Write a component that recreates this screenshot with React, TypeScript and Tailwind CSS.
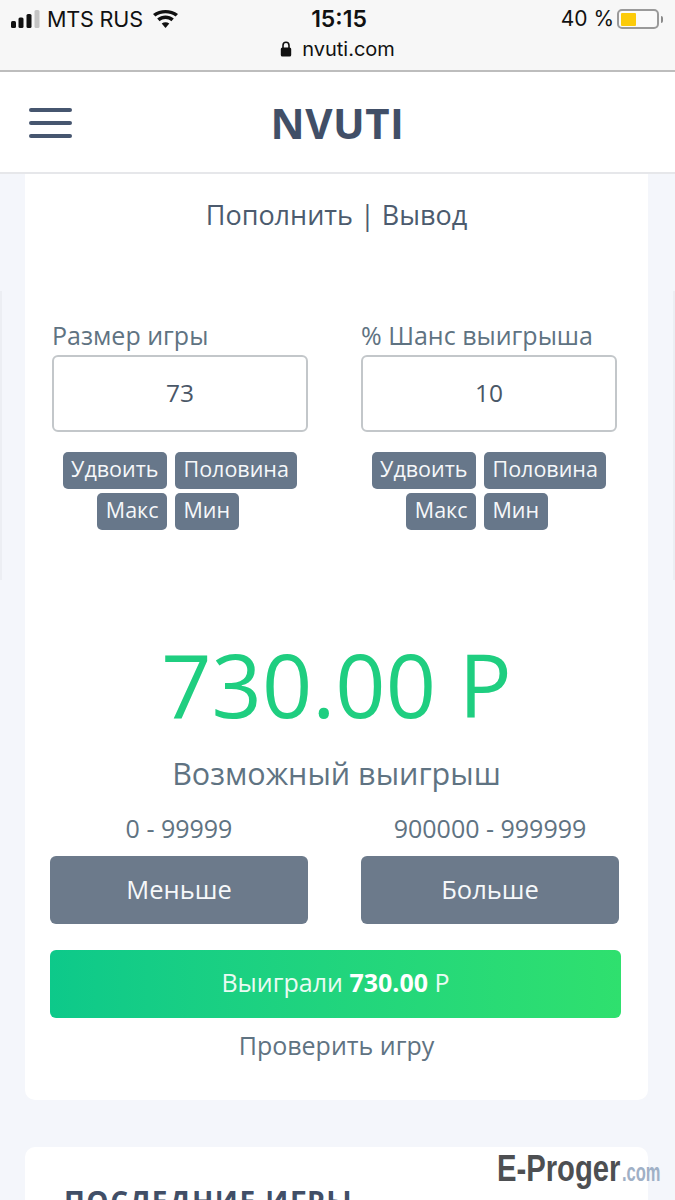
const sans = "font-['Open_Sans','Noto_Sans',sans-serif]";

function Signal() {
  return (
    <svg width="30" height="18" viewBox="0 0 30 18" className="block">
      <rect x="0" y="11" width="5" height="7" rx="1.5" fill="#111" />
      <rect x="7.5" y="7.5" width="5" height="10.5" rx="1.5" fill="#111" />
      <rect x="15.5" y="4" width="5" height="14" rx="1.5" fill="#111" />
      <rect x="23.5" y="0" width="5" height="18" rx="1.5" fill="#c4c4c4" />
    </svg>
  );
}

function Wifi() {
  return (
    <svg width="25" height="18" viewBox="0 0 25 18" className="block">
      <path d="M12.5 18 L8.7 13.6 C11 11.8 14 11.8 16.3 13.6 Z" fill="#111" />
      <path d="M6.6 11.2 L4.2 8.5 C9 4.6 16 4.6 20.8 8.5 L18.4 11.2 C14.8 8.4 10.2 8.4 6.6 11.2 Z" fill="#111" />
      <path d="M2.4 6.5 L0 3.9 C7 -1.3 18 -1.3 25 3.9 L22.6 6.5 C16.5 2.1 8.5 2.1 2.4 6.5 Z" fill="#111" />
    </svg>
  );
}

function Battery() {
  return (
    <div className="flex items-center gap-[2px]">
      <div className="w-[42px] h-[20px] rounded-[5px] border-2 border-[#9a9a9a] p-[1.5px] bg-[#fafafa]">
        <div className="w-[15px] h-full rounded-[1px] bg-[#fccb0a]" />
      </div>
      <div className="w-[2px] h-[7px] rounded-r-sm bg-[#8a8a8a]" />
    </div>
  );
}

function Lock() {
  return (
    <svg width="12" height="16" viewBox="0 0 12 16" className="block">
      <path d="M3 7 V4.5 C3 2.6 4.3 1.3 6 1.3 C7.7 1.3 9 2.6 9 4.5 V7" fill="none" stroke="#111" strokeWidth="1.6" />
      <rect x="0.8" y="6.5" width="10.4" height="9" rx="1.6" fill="#111" />
    </svg>
  );
}

function SmallBtn({ label }: { label: string }) {
  return (
    <span className="inline-flex items-center h-[37px] px-[8.5px] pb-[3px] rounded-[5px] bg-[#67778a] text-[#f6f8fa] text-[21.5px] leading-none">
      {label}
    </span>
  );
}

function Field({ label, value }: { label: string; value: string }) {
  return (
    <div className="w-[256px] flex flex-col">
      <div className="text-[25px] leading-[33px] text-[#5f7382] whitespace-nowrap">{label}</div>
      <div className="mt-[3px] h-[77px] rounded-[6px] border-2 border-[#c3c7ca] bg-white flex items-center justify-center text-[24.5px] text-[#4a5767]">
        {value}
      </div>
      <div className="mt-[20px] flex flex-col gap-[4px]">
        <div className="flex justify-center gap-[8px]">
          <SmallBtn label="Удвоить" />
          <SmallBtn label="Половина" />
        </div>
        <div className="flex justify-center gap-[8px] mr-[24px]">
          <SmallBtn label="Макс" />
          <SmallBtn label="Мин" />
        </div>
      </div>
    </div>
  );
}

function Bet({ range, label }: { range: string; label: string }) {
  return (
    <div className="w-[258px] flex flex-col items-center">
      <div className="text-[25px] leading-[33px] text-[#5f7382] whitespace-nowrap">{range}</div>
      <div className="mt-[11px] w-full h-[68px] pb-[2px] rounded-[6px] bg-[#6c7a8b] flex items-center justify-center text-[25.5px] text-[#f6f8fa]">
        {label}
      </div>
    </div>
  );
}

export default function App() {
  return (
    <div className={`w-[675px] h-[1200px] overflow-hidden bg-[#f4f6fb] flex flex-col ${sans}`}>
      <div className="h-[72px] shrink-0 bg-[#f7f7f7] border-b-2 border-[#bdbdbd] px-[10px] font-['Inter',sans-serif] text-[#111]">
        <div className="h-[38px] flex items-center justify-between">
          <div className="flex items-center w-[200px]">
            <span className="ml-[1px]"><Signal /></span>
            <span className="ml-[6px] text-[21.6px] tracking-[-0.2px] whitespace-nowrap">MTS RUS</span>
            <span className="ml-[10px]"><Wifi /></span>
          </div>
          <div className="text-[23px] font-semibold ml-[3px]">15:15</div>
          <div className="flex items-center justify-end w-[200px] pr-[2px]">
            <span className="text-[21px] mr-[3px] whitespace-nowrap">40 %</span>
            <Battery />
          </div>
        </div>
        <div className="flex items-center justify-center gap-[10px] text-[20px] leading-[22px]">
          <Lock />
          <span>nvuti.com</span>
        </div>
      </div>

      <div className="h-[102px] shrink-0 bg-white border-b-2 border-[#e6e7ea] relative flex items-center justify-center">
        <div className="absolute left-[29px] top-[36px] w-[43px] flex flex-col gap-[9px]">
          <div className="h-[4px] rounded-full bg-[#46566f]" />
          <div className="h-[4px] rounded-full bg-[#46566f]" />
          <div className="h-[4px] rounded-full bg-[#46566f]" />
        </div>
        <div className="pt-[2px] text-[42px] font-bold text-[#414f67] tracking-[0.5px] leading-none">NVUTI</div>
      </div>

      <div className="relative flex-1 flex flex-col min-h-0">
        <div className="absolute left-0 top-[117px] w-[2px] h-[289px] bg-[#eceef3]" />
        <div className="absolute right-0 top-[117px] w-[2px] h-[289px] bg-[#eceef3]" />

        <div className="relative ml-[25px] mr-[27px] h-[926px] shrink-0 rounded-b-[10px] bg-white flex flex-col">
          <div className="pt-[23px] text-center text-[27px] leading-[36px] text-[#4c5b6e] whitespace-nowrap">
            Пополнить | Вывод
          </div>
          <div className="mt-[86px] pl-[27px] pr-[27px] flex justify-between">
            <Field label="Размер игры" value="73" />
            <div className="mr-[4px]">
              <Field label="% Шанс выигрыша" value="10" />
            </div>
          </div>
          <div className="mt-[96px] text-center text-[88px] leading-[116px] text-[#1fce80] whitespace-nowrap">730.00 Р</div>
          <div className="mt-[11px] text-center text-[30.5px] leading-[40px] text-[#5f7382] whitespace-nowrap">Возможный выигрыш</div>
          <div className="mt-[19px] px-[25px] flex justify-between">
            <Bet range="0 - 99999" label="Меньше" />
            <div className="mr-[4px]">
              <Bet range="900000 - 999999" label="Больше" />
            </div>
          </div>
          <div className="mt-[26px] ml-[25px] mr-[27px] h-[68px] pb-[2px] rounded-[6px] bg-gradient-to-r from-[#0dc98a] to-[#2fe06e] flex items-center justify-center text-[25px] text-[#e9fbf3]">
            <span>Выиграли <b className="font-bold text-white">730.00</b> Р</span>
          </div>
          <div className="mt-[9px] text-center text-[25px] leading-[36px] text-[#5f7382] whitespace-nowrap">Проверить игру</div>
        </div>

        <div className="mt-[47px] ml-[25px] mr-[27px] flex-1 rounded-t-[10px] bg-white px-[39px] pt-[38px] overflow-hidden">
          <div className="text-[28px] leading-[32px] font-bold text-[#414f67] tracking-[1.5px] whitespace-nowrap">ПОСЛЕДНИЕ ИГРЫ</div>
        </div>

        <div className="absolute left-[497px] top-[976px] flex items-baseline whitespace-nowrap font-['Liberation_Sans',sans-serif] font-bold leading-none">
          <span className="inline-block w-[125px] text-[37px] text-[#4d4f52] [transform:scaleX(0.79)] origin-left">E-Proger</span>
          <span className="inline-block text-[25px] text-[#9fb0c6] [transform:scaleX(0.66)] origin-left">.com</span>
        </div>
      </div>
    </div>
  );
}
